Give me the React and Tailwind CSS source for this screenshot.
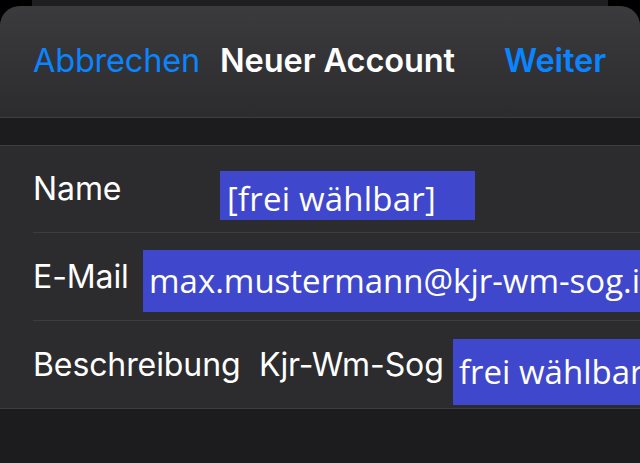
export default function App() {
  const sf = { fontFamily: 'Inter, "Liberation Sans", sans-serif' };
  const hl = { fontFamily: '"Open Sans", "Noto Sans", sans-serif' };
  return (
    <div className="w-[640px] h-[463px] bg-black overflow-hidden flex flex-col" style={sf}>
      <div className="h-[6px] shrink-0 px-[32px]">
        <div className="h-full bg-[#1f1f21]" />
      </div>
      <div className="flex-1 flex flex-col rounded-t-[20px] overflow-hidden bg-[#1c1c1e]">
        <div className="h-[112px] shrink-0 flex items-center border-b border-[#3d3d3f] bg-gradient-to-b from-[#3b3b3d] to-[#2c2c2e] pl-[33px] pr-[34px]">
          <span className="text-[32.5px] text-[#0a84ff] tracking-[-0.2px]">Abbrechen</span>
          <span className="ml-[20px] text-[32.5px] font-semibold text-white tracking-[-0.1px]">Neuer Account</span>
          <span className="ml-auto text-[32.5px] font-semibold text-[#0a84ff] tracking-[-0.1px]">Weiter</span>
        </div>
        <div className="h-[27px] shrink-0" />
        <div className="bg-[#2c2c2e] border-t border-b border-[#3d3d3f] text-white text-[32px] tracking-[-0.1px]">
          <div className="pl-[33px]">
            <div className="h-[87px] flex items-center border-b border-[#3d3d3f]">
              <span className="w-[187px] shrink-0">Name</span>
              <div className="mt-[12px] w-[255px] h-[49px] bg-[#3f48cc] overflow-hidden">
                <div className="pl-[7px] pt-[11px] leading-[33px] text-[33px] tracking-[0.2px] whitespace-nowrap" style={hl}>[frei wählbar]</div>
              </div>
            </div>
          </div>
          <div className="pl-[33px]">
            <div className="h-[88px] flex items-center border-b border-[#3d3d3f]">
              <span className="w-[110px] shrink-0">E-Mail</span>
              <div className="mt-[8px] flex-1 min-w-0 h-[62px] bg-[#3f48cc] overflow-hidden flex items-center">
                <div className="pl-[6px] text-[33px] tracking-normal whitespace-nowrap" style={hl}>max.mustermann@kjr-wm-sog.info</div>
              </div>
            </div>
          </div>
          <div className="pl-[33px]">
            <div className="h-[87px] flex items-center">
              <span className="w-[226px] shrink-0">Beschreibung</span>
              <span className="w-[194px] shrink-0">Kjr-Wm-Sog</span>
              <div className="mt-[14px] flex-1 min-w-0 h-[66px] bg-[#3f48cc] overflow-hidden flex items-center">
                <div className="pl-[6px] text-[33px] tracking-normal whitespace-nowrap" style={hl}>frei wählbar</div>
              </div>
            </div>
          </div>
        </div>
        <div className="flex-1" />
      </div>
    </div>
  );
}
